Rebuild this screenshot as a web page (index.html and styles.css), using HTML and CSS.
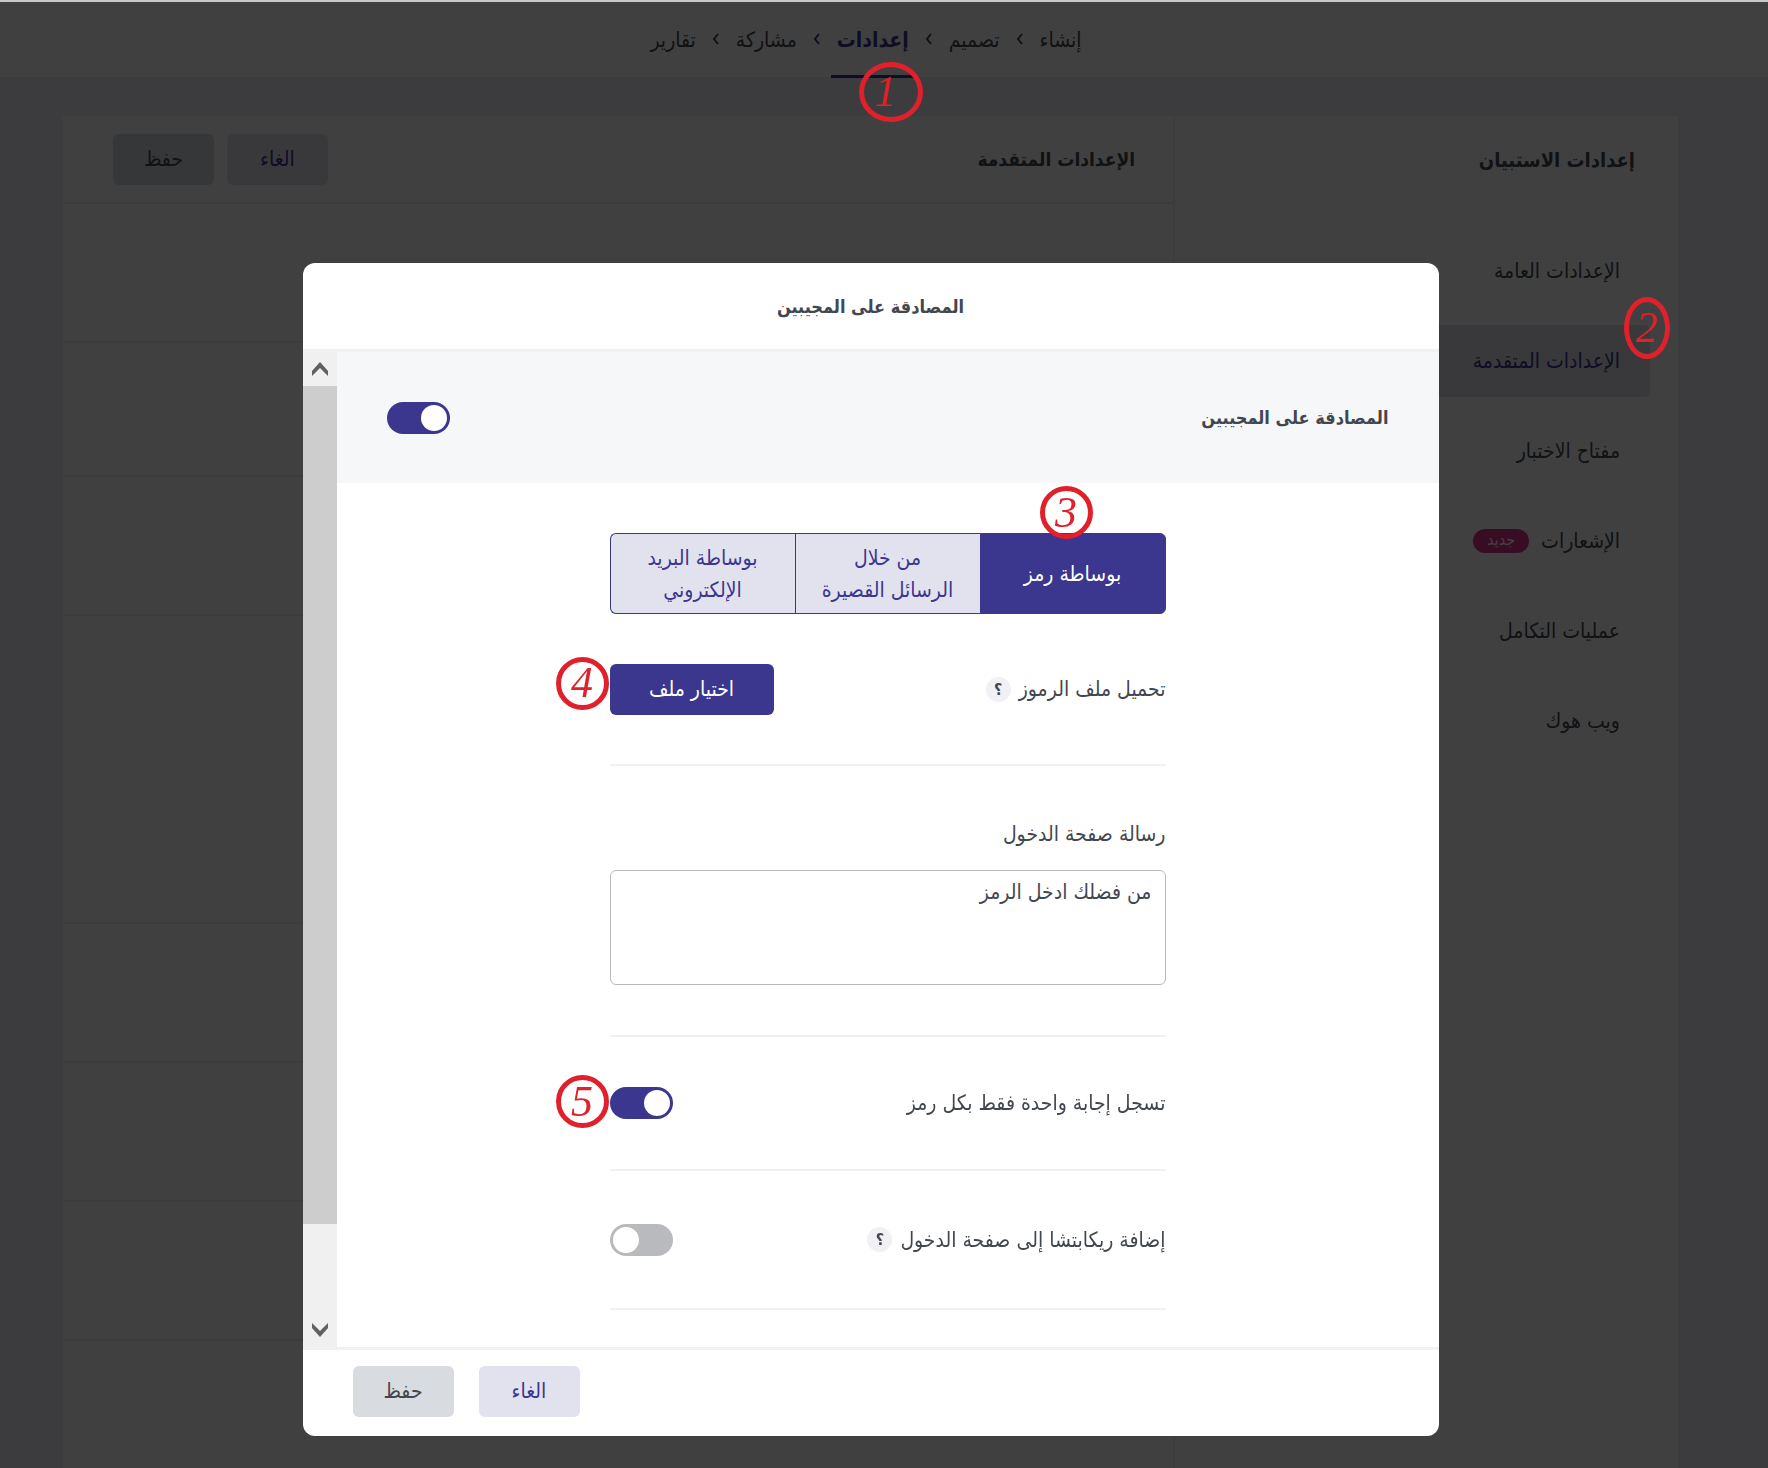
FILE: index.html
```html
<!DOCTYPE html>
<html lang="ar" dir="rtl">
<head>
    <meta charset="UTF-8">
    <meta name="viewport" content="width=device-width, initial-scale=1.0">
    <title>إعدادات الاستبيان</title>
    <link rel="stylesheet" href="styles.css">
</head>
<body>
    <header class="topbar">
        <nav class="steps">
            <a href="#">إنشاء</a>
            <svg class="chevron" viewBox="0 0 8 12"><path d="M6 1L2 6l4 5"/></svg>
            <a href="#">تصميم</a>
            <svg class="chevron" viewBox="0 0 8 12"><path d="M6 1L2 6l4 5"/></svg>
            <a href="#" class="current">إعدادات<span class="marker marker-1">1</span></a>
            <svg class="chevron current-chevron" viewBox="0 0 8 12"><path d="M6 1L2 6l4 5"/></svg>
            <a href="#">مشاركة</a>
            <svg class="chevron" viewBox="0 0 8 12"><path d="M6 1L2 6l4 5"/></svg>
            <a href="#">تقارير</a>
        </nav>
    </header>

    <main class="card">
        <aside class="sidebar">
            <h2>إعدادات الاستبيان</h2>
            <ul class="menu">
                <li><a href="#">الإعدادات العامة</a></li>
                <li><a href="#" class="active">الإعدادات المتقدمة<span class="marker marker-2">2</span></a></li>
                <li><a href="#">مفتاح الاختبار</a></li>
                <li><a href="#">الإشعارات <span class="badge">جديد</span></a></li>
                <li><a href="#">عمليات التكامل</a></li>
                <li><a href="#">ويب هوك</a></li>
            </ul>
        </aside>
        <section class="panel">
            <div class="panel-head">
                <h2>الإعدادات المتقدمة</h2>
                <div class="panel-buttons">
                    <button class="btn btn-light">الغاء</button>
                    <button class="btn btn-grey">حفظ</button>
                </div>
            </div>
            <div class="panel-row"></div>
            <div class="panel-row short"></div>
            <div class="panel-row"></div>
            <div class="panel-row tall"></div>
            <div class="panel-row"></div>
            <div class="panel-row"></div>
            <div class="panel-row"></div>
            <div class="panel-row"></div>
        </section>
    </main>

    <!-- Respondent authentication dialog -->
    <div class="overlay">
        <div class="modal" role="dialog" aria-labelledby="modalTitle">
            <h2 class="modal-title" id="modalTitle">المصادقة على المجيبين</h2>

            <div class="modal-body">
                <div class="modal-content">
                    <div class="auth-head">
                        <label for="auth">المصادقة على المجيبين</label>
                        <input type="checkbox" class="toggle" id="auth" checked>
                    </div>

                    <div class="form">
                        <div class="tabs">
                            <button class="tab selected">بوساطة رمز<span class="marker marker-3">3</span></button>
                            <button class="tab">من خلال<br>الرسائل القصيرة</button>
                            <button class="tab">بوساطة البريد<br>الإلكتروني</button>
                        </div>

                        <div class="row upload-row">
                            <div class="row-label">
                                <span>تحميل ملف الرموز</span>
                                <button class="help">؟</button>
                            </div>
                            <div class="control">
                                <button class="btn btn-primary">اختيار ملف</button>
                                <span class="marker marker-4">4</span>
                            </div>
                        </div>

                        <div class="row message-row">
                            <label for="message">رسالة صفحة الدخول</label>
                            <textarea id="message">من فضلك ادخل الرمز</textarea>
                        </div>

                        <div class="row single-row">
                            <label for="single">تسجل إجابة واحدة فقط بكل رمز</label>
                            <div class="control">
                                <input type="checkbox" class="toggle" id="single" checked>
                                <span class="marker marker-5">5</span>
                            </div>
                        </div>

                        <div class="row">
                            <div class="row-label">
                                <label for="captcha">إضافة ريكابتشا إلى صفحة الدخول</label>
                                <button class="help">؟</button>
                            </div>
                            <input type="checkbox" class="toggle" id="captcha">
                        </div>
                    </div>
                </div>

                <div class="scrollbar">
                    <div class="scroll-arrow"><svg viewBox="0 0 16 16"><path d="M0 10l8-9 8 9v5l-8-8-8 8z"/></svg></div>
                    <div class="scroll-thumb"></div>
                    <div class="scroll-arrow"><svg viewBox="0 0 16 16"><path d="M0 1l8 8 8-8v5l-8 9-8-9z"/></svg></div>
                </div>
            </div>

            <div class="modal-footer">
                <button class="btn btn-light">الغاء</button>
                <button class="btn btn-grey">حفظ</button>
            </div>
        </div>
    </div>
</body>
</html>
```

FILE: styles.css
```css
* {
    box-sizing: border-box;
}
body {
    margin: 0;
    height: 100vh;
    overflow: hidden;
    background-color: #f0f0f8;
    color: #42474f;
    font-family: "DejaVu Sans Condensed", "DejaVu Sans", sans-serif;
    font-size: 21px;
    line-height: 32px;
}
h2 {
    margin: 0;
    font-size: 20px;
    font-weight: bold;
}
a {
    color: inherit;
    text-decoration: none;
}
button, textarea {
    font: inherit;
    color: inherit;
}
button {
    cursor: pointer;
    border: none;
    padding: 0;
}

/* Top steps */
.topbar {
    height: 77px;
    padding-right: 36px;
    background-color: #fff;
}
.steps {
    display: flex;
    justify-content: center;
    gap: 16px;
    height: 78px;
}
.steps a {
    position: relative;
    height: 78px;
    line-height: 80px;
}
.steps .current {
    padding: 0 6px;
    margin: 0 -6px;
    color: #3b368e;
    font-weight: bold;
    border-bottom: 3px solid #3b368e;
}
.chevron {
    align-self: center;
    width: 8px;
    height: 12px;
    fill: none;
    stroke: #42474f;
    stroke-width: 2;
}
.current-chevron {
    stroke: #3b368e;
}

/* Settings card */
.card {
    display: flex;
    margin: 39px 90px 0 63px;
    background-color: #fff;
}
.sidebar {
    flex: 0 0 505px;
    border-left: 2px solid #f4f4f8;
}
.sidebar h2 {
    padding: 28px 43px;
}
.menu {
    margin: 0;
    padding: 31px 28px;
    list-style: none;
}
.menu li {
    margin-bottom: 18px;
}
.menu a {
    display: flex;
    align-items: center;
    gap: 12px;
    position: relative;
    height: 72px;
    padding: 0 30px;
    border-radius: 6px;
}
.menu .active {
    color: #3b368e;
    background-color: #e2e2ee;
}
.badge {
    width: 56px;
    height: 24px;
    border-radius: 12px;
    background-color: #e0308c;
    color: #fff;
    font-size: 16px;
    line-height: 22px;
    text-align: center;
}
.panel {
    flex: 1;
}
.panel-head {
    display: flex;
    justify-content: space-between;
    align-items: center;
    height: 88px;
    padding: 0 38px 0 50px;
    border-bottom: 2px solid #f0f0f2;
}
.panel-head h2 {
    font-size: 19px;
}
.panel-buttons {
    display: flex;
    gap: 13px;
}
.panel-row {
    height: 139px;
    border-bottom: 2px solid #f0f0f2;
}
.panel-row.short {
    height: 134px;
}
.panel-row.tall {
    height: 308px;
}

.btn {
    width: 101px;
    height: 51px;
    border-radius: 6px;
}
.btn-light {
    color: #3b368e;
    background-color: #e2e2ee;
}
.btn-grey {
    background-color: #d8dbdf;
}
.btn-primary {
    width: 164px;
    color: #fff;
    background-color: #3b368e;
}

/* Dialog */
.overlay {
    position: fixed;
    inset: 0;
    padding: 261px 27px 32px 0;
    background-color: rgba(0, 0, 0, 0.75);
    border-top: 2px solid #c8c8c8;
}
.modal {
    width: 1136px;
    max-width: 100%;
    margin: 0 auto;
    background-color: #fff;
    border-radius: 12px;
}
.modal-title {
    height: 89px;
    font-size: 18px;
    line-height: 88px;
    text-align: center;
    border-bottom: 3px solid #f1f1f2;
}
.modal-body {
    display: flex;
}
.modal-content {
    flex: 1;
}
.auth-head {
    display: flex;
    justify-content: space-between;
    align-items: center;
    height: 131px;
    padding: 0 50px;
    background-color: #f6f7f9;
    font-size: 18px;
    font-weight: bold;
}
.form {
    max-width: 556px;
    margin: 0 auto;
    padding: 50px 0 37px;
}
.tabs {
    display: flex;
    height: 81px;
}
.tab {
    position: relative;
    flex: 1;
    border: 1px solid #3b368e;
    color: #3b368e;
    background-color: #e2e2ee;
}
.tab + .tab {
    border-right: none;
}
.tab.selected {
    border-radius: 0 6px 6px 0;
    color: #fff;
    background-color: #3b368e;
}
.tab:last-child {
    border-radius: 6px 0 0 6px;
}
.row {
    display: flex;
    justify-content: space-between;
    align-items: center;
    height: 139px;
    border-bottom: 2px solid #f0f0f2;
}
.upload-row {
    height: 152px;
}
.message-row {
    flex-direction: column;
    align-items: stretch;
    justify-content: flex-start;
    gap: 20px;
    height: 271px;
    padding-top: 52px;
}
.single-row {
    height: 134px;
}
.row-label {
    display: flex;
    align-items: center;
    gap: 8px;
}
.help {
    width: 25px;
    height: 25px;
    border-radius: 50%;
    background-color: #f0f0f5;
    font-size: 16px;
    font-weight: bold;
    line-height: 25px;
}
textarea {
    height: 115px;
    padding: 5px 13px;
    border: 1px solid #b9babd;
    border-radius: 6px;
    background-color: #fff;
    resize: none;
}
.control {
    display: flex;
    position: relative;
}
.toggle {
    appearance: none;
    display: flex;
    justify-content: flex-end;
    width: 63px;
    height: 32px;
    margin: 0;
    padding: 3px;
    border-radius: 16px;
    background-color: #b9babd;
    cursor: pointer;
}
.toggle::before {
    content: "";
    width: 26px;
    height: 26px;
    border-radius: 50%;
    background-color: #fff;
}
.toggle:checked {
    justify-content: flex-start;
    background-color: #3b368e;
}
.modal-footer {
    display: flex;
    justify-content: flex-end;
    align-items: center;
    gap: 25px;
    height: 89px;
    padding: 0 50px 4px;
    border-top: 3px solid #f1f1f2;
}

.scrollbar {
    display: flex;
    flex-direction: column;
    width: 34px;
    background-color: #f0f0f0;
}
.scroll-arrow {
    display: flex;
    justify-content: center;
    align-items: center;
    height: 34px;
}
.scroll-arrow svg {
    width: 16px;
    height: 16px;
    fill: #606060;
}
.scroll-thumb {
    height: 838px;
    margin-bottom: auto;
    background-color: #cdcdcd;
}

/* Numbered step markers, drawn above the dialog */
.marker {
    position: absolute;
    z-index: 5;
    display: flex;
    justify-content: center;
    align-items: center;
    width: 53px;
    height: 53px;
    border: 5px solid #e0202a;
    border-radius: 50%;
    color: #e0202a;
    font-family: "Liberation Serif", serif;
    font-size: 44px;
    font-style: italic;
    font-weight: normal;
    line-height: 44px;
}
.marker-1 {
    top: 62px;
    left: 28px;
    width: 64px;
    height: 60px;
    padding-right: 10px;
}
.marker-2 {
    top: -28px;
    right: -20px;
    width: 46px;
    height: 62px;
}
.marker-3 {
    top: -48px;
    left: 59px;
}
.marker-4 {
    top: -7px;
    left: -54px;
}
.marker-5 {
    top: -12px;
    left: -54px;
}
```
